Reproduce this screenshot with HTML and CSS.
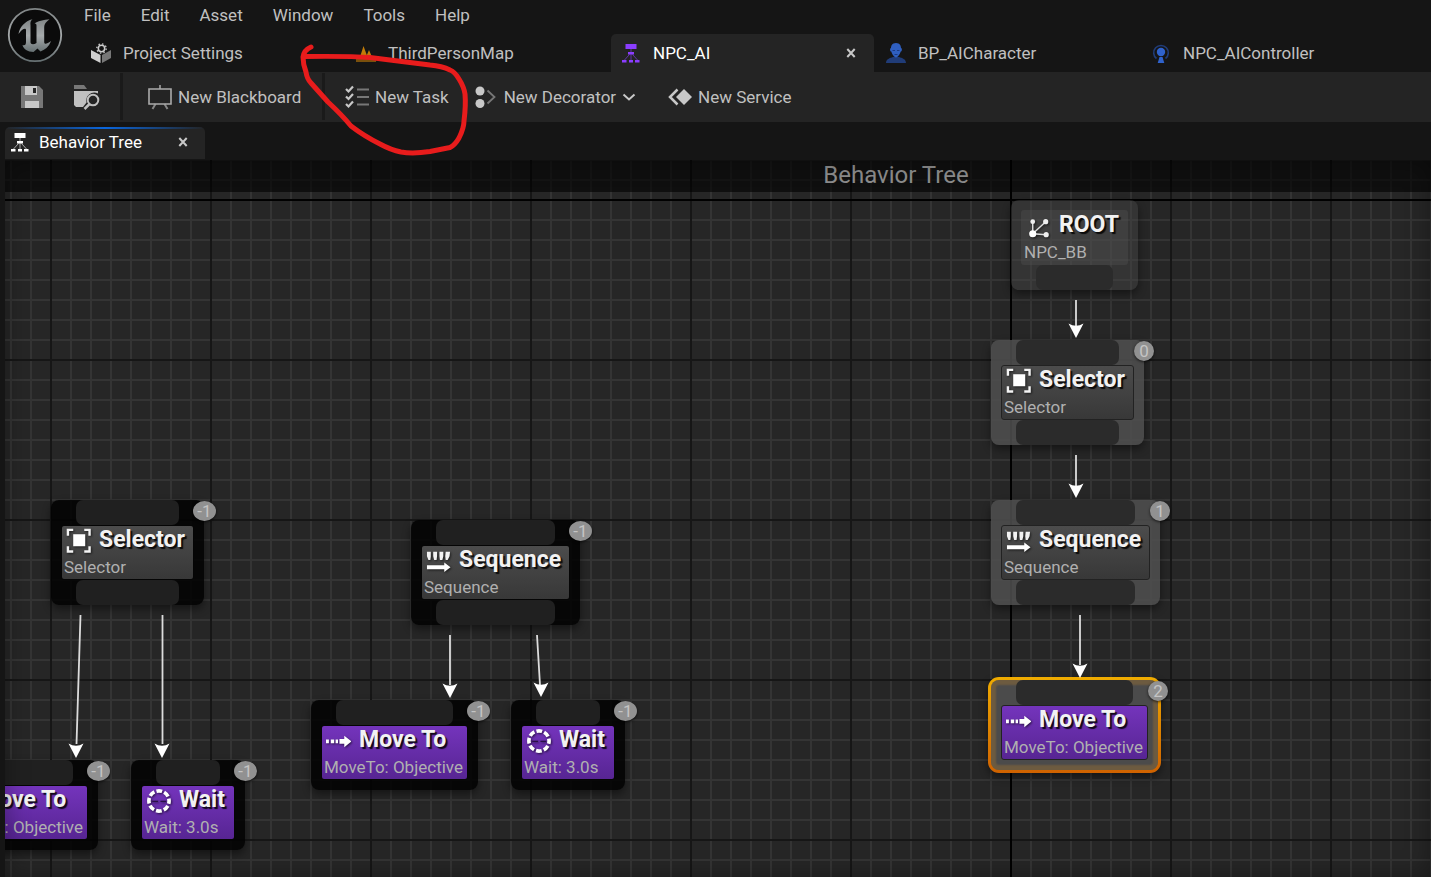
FILE: index.html
```html
<!DOCTYPE html>
<html lang="en">
<head>
<meta charset="utf-8">
<title>NPC_AI - Behavior Tree</title>
<link rel="stylesheet" href="styles.css">
</head>
<body>
<svg class="defs" aria-hidden="true">
  <defs>
    <linearGradient id="metal" x1="0" y1="0" x2="0" y2="1">
      <stop offset="0" stop-color="#808586"/><stop offset=".5" stop-color="#a6aaab"/><stop offset="1" stop-color="#667072"/>
    </linearGradient>
    <symbol id="i-tree" viewBox="0 0 20 20">
      <path d="M4.500 1h11v5h-11zM7 9h6v2.500H7zM1 17h4.500v2.500H1zM8 17h4v2.500H8zM14 17h4.500v2.500H14z" fill="currentColor"/>
      <path d="M10 6v3M10 11v6M8.500 11.500L3.500 17M11.500 11.500L16.500 17" stroke="currentColor" opacity=".6" fill="none"/>
    </symbol>
    <symbol id="i-x" viewBox="0 0 10 10"><path d="M1.300 1L8.700 9M8.700 1L1.300 9" stroke="currentColor" stroke-width="2" fill="none"/></symbol>
    <symbol id="n-selector" viewBox="0 0 26 26">
      <path d="M2 8.500v-6h5.500M19 2.500h5.500v6M24.500 19.500v5.500h-5.500M7.500 25H2v-5.500" stroke="#f4f4f4" stroke-width="2.500" fill="none"/>
      <rect x="7.500" y="7" width="12.500" height="12.500" fill="#fff"/>
    </symbol>
    <symbol id="n-sequence" viewBox="0 0 26 26">
      <path d="M1 4.500h4v5L4.500 13H2.500L1 9zM7.500 4.500h4V9l-.5 4H8.500l-1-4zM14 4.500h4V9l-1 4h-2.500L14 9zM20.500 4.500h4.500L24.500 9l-2 4h-2l-.5-4z" fill="#f2f2f2"/>
      <path d="M1 18.500h18V15.500l6.500 5-6.500 5V22.500H1z" fill="#fff"/>
    </symbol>
    <symbol id="n-move" viewBox="0 0 26 26">
      <path d="M0 12.500h3v4H0zM5 12.500h3.500v4H5zM10 12.500h2.500v4H10zM14 12h5V8.500l7.500 6-7.500 6V17h-5z" fill="#fff"/>
    </symbol>
    <symbol id="n-wait" viewBox="0 0 26 26">
      <circle cx="13.500" cy="14" r="10.500" fill="none" stroke="#fff" stroke-width="3.800" stroke-dasharray="6 2.250" stroke-dashoffset="3"/>
      <path d="M6.500 14.500h6M15 14.500h6" stroke="#2a1048" stroke-width="1.200"/>
    </symbol>
    <symbol id="n-root" viewBox="0 0 26 26">
      <path d="M7 20V7M7 20L21 7M7 20l14 1" stroke="#ddd" stroke-width="1.500" fill="none"/>
      <circle cx="7" cy="20" r="3.700" fill="#fff"/><circle cx="7" cy="7.500" r="2.500" fill="#eee"/><circle cx="20.500" cy="7.500" r="2.700" fill="#eee"/><circle cx="21" cy="21" r="2.700" fill="#eee"/>
    </symbol>
  </defs>
</svg>

<header class="top">
  <a class="logo" href="#" aria-label="Unreal Engine">
    <svg width="56" height="56" viewBox="0 0 56 56">
      <circle cx="28" cy="28" r="26.200" fill="#0b0b0b" stroke="url(#metal)" stroke-width="1.800"/>
      <path fill="url(#metal)" d="M11.500 27C12.500 20 18 14 25.500 12.200C23 14.500 23.500 16 23.500 18V35C23.500 37.500 26.500 38 29.500 36V18.500C29.500 16.500 28.500 16.500 27.500 17C30 13.500 37 13 42.500 12.200C39 15 37.200 17 37.200 20V35C37.200 37.500 39.500 37.500 44 34C42 40 37.500 43 33.500 44.500L30.500 41.500L26.500 45C20.500 45 16.500 42 15.500 38C18 39 19 37.500 19 35V23C19 20.500 15 21.500 11.500 27Z"/>
    </svg>
  </a>
  <div class="top-main">
    <nav class="menu" aria-label="Main menu">
      <button>File</button><button>Edit</button><button>Asset</button><button>Window</button><button>Tools</button><button>Help</button>
    </nav>
    <nav class="tabs" aria-label="Open assets">
      <a class="tab" href="#">
        <svg class="tab-icon" viewBox="0 0 20 20"><path d="M0 7l9.500 5v8L0 15z" fill="#d0d0d0"/><path d="M20 7l-9 5v8l9-5z" fill="#777"/><circle cx="10.500" cy="5.500" r="3.200" fill="#151515" stroke="#ccc" stroke-width="1.500"/><circle cx="10.500" cy="5.500" r="4.700" fill="none" stroke="#ccc" stroke-width="1.300" stroke-dasharray="1.500 2.190"/></svg>
        <span>Project Settings</span></a>
      <a class="tab" href="#">
        <svg class="tab-icon" viewBox="0 0 20 20"><path d="M4 14L7.500 3l4 11zM10 14l3-7 3 7z" fill="#c27c08"/><path d="M0 13h20v6H0z" fill="#7a500c"/></svg>
        <span>ThirdPersonMap</span></a>
      <div class="tab active">
        <svg class="tab-icon purple"><use href="#i-tree"/></svg>
        <span>NPC_AI</span>
        <button class="close" aria-label="Close NPC_AI"><svg width="10" height="10"><use href="#i-x"/></svg></button></div>
      <a class="tab" href="#">
        <svg class="tab-icon" viewBox="0 0 20 20"><path d="M0 20c0-4 4-5 7-6h6c3 1 7 2 7 6z" fill="#203c78"/><path d="M10 0c4 0 5 3 5 5 1.300 0 1.200 3.500-.3 3.600C14 11 12 14.500 10 14.500S6 11 5.300 8.600C3.800 8.500 3.700 5 5 5c0-2 1-5 5-5z" fill="#2f5fc0"/><path d="M6.500 7.500h2.500M11 7.500h2.500M8.500 11.500h3" stroke="#1b3a80"/></svg>
        <span>BP_AICharacter</span></a>
      <a class="tab" href="#">
        <svg class="tab-icon" viewBox="0 0 20 20"><path d="M5.500 15.500A7.300 7.300 0 1 1 14.500 15.500" fill="none" stroke="#203c78" stroke-width="1.600"/><circle cx="10" cy="9" r="4.200" fill="#2f62cc"/><path d="M8.500 14h3l1.800 6H6.700z" fill="#2f62cc"/></svg>
        <span>NPC_AIController</span></a>
    </nav>
  </div>
</header>

<div class="toolbar" role="toolbar" aria-label="Asset tools">
  <div class="group files">
    <button aria-label="Save"><svg width="24" height="24" viewBox="0 0 24 24"><path d="M1 1h18l4 4v18H1z" fill="#777"/><path d="M5 1h12v9H5zM5 16h14v7H5z" fill="#c8c8c8"/><path d="M13 3h3v5h-3z" fill="#242424"/></svg></button>
    <button aria-label="Browse"><svg width="26" height="26" viewBox="0 0 26 26"><path d="M0 1h10l3 4H0z" fill="#777"/><path d="M0 7h24v2.500a8 8 0 0 0-11.500 9L9 23H2l-2-2z" fill="#c0c0c0"/><circle cx="19" cy="16" r="5.300" fill="none" stroke="#c0c0c0" stroke-width="2"/><path d="M15.500 20L10.500 25" stroke="#c0c0c0" stroke-width="2.500"/></svg></button>
  </div>
  <div class="group board">
    <button><svg width="24" height="26" viewBox="0 0 24 26"><path d="M12 1v4M7.500 20L4.500 25M16.500 20l3 5" stroke="#888" stroke-width="2"/><path d="M1 5h22v15H1z" fill="none" stroke="#aaa" stroke-width="1.600"/></svg><span>New Blackboard</span></button>
  </div>
  <div class="group tasks">
    <button><svg width="24" height="24" viewBox="0 0 24 24"><path d="M1 4l2.500 2.500L8 1.500M1 11.500L3.500 14 8 9M1 19l2.500 2.500L8 16.500" fill="none" stroke="#c8c8c8" stroke-width="2.200"/><path d="M12 4.500h12M12 12h12M12 19.500h12" stroke="#777" stroke-width="2"/></svg><span>New Task</span></button>
    <button><svg width="23" height="24" viewBox="0 0 23 24"><circle cx="5" cy="6" r="4.500" fill="#c8c8c8"/><circle cx="5" cy="18.500" r="4.500" fill="#c8c8c8"/><path d="M12.500 5.500L19.500 12l-7 6.500" fill="none" stroke="#777" stroke-width="1.800"/></svg><span>New Decorator</span><svg class="chev" width="14" height="8" viewBox="0 0 14 8"><path d="M1.500 1.500L7 6.500l5.500-5" fill="none" stroke="#c8c8c8" stroke-width="2"/></svg></button>
    <button><svg width="24" height="18" viewBox="0 0 24 18"><path d="M16 1l8 8-8 8-8-8z" fill="#c8c8c8"/><path d="M9.500 1.500L2 9l7.500 7.500" fill="none" stroke="#c8c8c8" stroke-width="2.500"/></svg><span>New Service</span></button>
  </div>
</div>

<div class="panel-tabs">
  <div class="panel-tab">
    <svg width="20" height="20"><use href="#i-tree"/></svg>
    <span>Behavior Tree</span>
    <button class="close" aria-label="Close Behavior Tree"><svg width="10" height="10"><use href="#i-x"/></svg></button>
  </div>
</div>

<main class="graph">
  <div class="axis-x"></div><div class="axis-y"></div>
  <h1 class="graph-title">Behavior Tree</h1>

  <article class="node root live">
    <div class="body"><h2><svg><use href="#n-root"/></svg>ROOT</h2><p>NPC_BB</p></div><i class="pin"></i>
  </article>
  <article class="node selector live at-r1">
    <i class="pin"></i><div class="body"><h2><svg><use href="#n-selector"/></svg>Selector</h2><p>Selector</p></div><i class="pin"></i><b class="badge">0</b>
  </article>
  <article class="node sequence live at-r2">
    <i class="pin"></i><div class="body"><h2><svg><use href="#n-sequence"/></svg>Sequence</h2><p>Sequence</p></div><i class="pin"></i><b class="badge">1</b>
  </article>
  <article class="node move live selected at-r3">
    <i class="pin"></i><div class="body task"><h2><svg><use href="#n-move"/></svg>Move To</h2><p>MoveTo: Objective</p></div><b class="badge">2</b>
  </article>
  <article class="node selector idle at-l1">
    <i class="pin"></i><div class="body"><h2><svg><use href="#n-selector"/></svg>Selector</h2><p>Selector</p></div><i class="pin"></i><b class="badge">-1</b>
  </article>
  <article class="node move idle at-l2">
    <i class="pin"></i><div class="body task"><h2><svg><use href="#n-move"/></svg>Move To</h2><p>MoveTo: Objective</p></div><b class="badge">-1</b>
  </article>
  <article class="node wait idle at-l3">
    <i class="pin"></i><div class="body task"><h2><svg><use href="#n-wait"/></svg>Wait</h2><p>Wait: 3.0s</p></div><b class="badge">-1</b>
  </article>
  <article class="node sequence idle at-m1">
    <i class="pin"></i><div class="body"><h2><svg><use href="#n-sequence"/></svg>Sequence</h2><p>Sequence</p></div><i class="pin"></i><b class="badge">-1</b>
  </article>
  <article class="node move idle at-m2">
    <i class="pin"></i><div class="body task"><h2><svg><use href="#n-move"/></svg>Move To</h2><p>MoveTo: Objective</p></div><b class="badge">-1</b>
  </article>
  <article class="node wait idle at-m3">
    <i class="pin"></i><div class="body task"><h2><svg><use href="#n-wait"/></svg>Wait</h2><p>Wait: 3.0s</p></div><b class="badge">-1</b>
  </article>

  <svg class="wires" width="1426" height="717" viewBox="5 160 1426 717" aria-hidden="true">
    <defs><path id="head" d="M0 0L-7.500-14.500Q0-10 7.500-14.500Z" fill="#fff"/></defs>
    <g stroke="#dcdcdc" stroke-width="1.800">
      <path d="M1076 300v26M1076 455v31M1080 615v50M80.500 615L76.500 744M162.500 615v129M450 635v50M537 635l3 50"/>
    </g>
    <use href="#head" x="1076" y="338"/><use href="#head" x="1076" y="498"/><use href="#head" x="1080" y="678"/>
    <use href="#head" x="76" y="758"/><use href="#head" x="162" y="758"/><use href="#head" x="450" y="698"/><use href="#head" x="541" y="697"/>
  </svg>
</main>

<svg class="ink" width="190" height="130" viewBox="290 35 190 130" aria-hidden="true">
  <path d="M311 47Q304 50 303 57Q303 64 306 72Q307 79 311 83L328 102Q342 115 351 126Q364 136 380 144Q391 150 401 152Q413 154 430 151.500L450 147.500Q455 145 459 138Q464 128 464 121Q466 105 465 94Q464 87 459 79Q455 72 450 70Q442 66 430 65L370 57.500Q350 56 304 56.500" fill="none" stroke="#e81c1c" stroke-width="5" stroke-linecap="round" stroke-linejoin="round"/>
</svg>
</body>
</html>
```
FILE: styles.css
```css
* { box-sizing: border-box; }
body {
  margin: 0;
  min-height: 100vh;
  display: flex;
  flex-direction: column;
  position: relative;
  overflow: hidden;
  background: #151515;
  color: #c0c0c0;
  font: 17px/20px Roboto, "Liberation Sans", sans-serif;
}
button { border: 0; padding: 0; background: none; color: inherit; font: inherit; }
a { color: inherit; text-decoration: none; }
svg { flex: none; display: block; }
h1, h2, p { margin: 0; }
.defs { position: absolute; width: 0; height: 0; }

.top { display: flex; }
.logo { padding: 7px 0 0 7px; width: 81px; height: 72px; }
.top-main { flex: 1; min-width: 0; }
.menu { display: flex; gap: 30px; height: 34px; padding: 5px 3px; }
.menu button { height: 20px; }
.tabs { display: flex; gap: 2px; }
.tab {
  display: flex;
  align-items: center;
  gap: 12px;
  width: 263px;
  height: 38px;
  padding: 0 18px 0 10px;
  border-radius: 5px 5px 0 0;
}
.tab.active { background: #242424; color: #fff; }
.tab-icon { width: 20px; height: 20px; }
.purple { color: #8b3dff; }
.close { margin-left: auto; color: #c8c8c8; }

.toolbar { display: flex; height: 50px; padding: 1px 0 2px; background: #242424; }
.group { display: flex; align-items: center; padding: 0 20px; border-right: 3px solid #1a1a1a; }
.group:last-child { border: 0; }
.group button { display: flex; align-items: center; gap: 6px; white-space: nowrap; }
.files { width: 123px; gap: 30px; }
.board { width: 202px; padding-left: 25px; }
.tasks { gap: 26px; }
.chev { margin-right: 6px; }

.panel-tabs { height: 38px; padding: 5px 5px 0; }
.panel-tab {
  display: flex;
  align-items: center;
  gap: 9px;
  width: 200px;
  height: 32px;
  padding: 0 17px 2px 5px;
  border-radius: 5px 5px 0 0;
  background: linear-gradient(90deg, #242424, #0a66dd 50%, #242424) top / 100% 2px no-repeat #242424;
  color: #fff;
}

.graph {
  position: relative;
  flex: 1;
  min-height: 717px;
  margin-left: 5px;
  overflow: hidden;
  background-color: #262626;
  background-image:
    linear-gradient(90deg, #161616 2px, transparent 2px),
    linear-gradient(#161616 2px, transparent 2px),
    linear-gradient(90deg, #343434 2px, transparent 2px),
    linear-gradient(#343434 2px, transparent 2px);
  background-size: 160px 160px, 160px 160px, 20px 20px, 20px 20px;
  background-position: 45px 39px, 45px 39px, 5px 19px, 5px 19px;
}
.graph::after { content: ""; position: absolute; inset: 0; box-shadow: inset 0 0 24px rgba(0, 0, 0, .35); pointer-events: none; }
.axis-x, .axis-y { position: absolute; background: #000; }
.axis-x { left: 0; right: 0; top: 39px; height: 2px; }
.axis-y { top: 0; bottom: 0; left: 1005px; width: 2px; }
.graph-title {
  position: relative;
  height: 32px;
  padding-left: 356px;
  background: rgba(0, 0, 0, .6);
  color: #8c8c8c;
  font-size: 24px;
  font-weight: 400;
  line-height: 30px;
  text-align: center;
}

.node {
  position: absolute;
  padding: 0 10px;
  border-radius: 8px;
  background: rgba(2, 2, 2, .88);
  box-shadow: 0 4px 8px rgba(0, 0, 0, .45);
}
.node.live { background: rgba(80, 80, 80, .85); }
.pin { display: block; height: 25px; margin: 0 15px; border-radius: 7px; background: #202020; }
.live .pin { background: #2b2b2b; }
.body {
  height: 55px;
  padding: 0 2px;
  border: 1px solid #050505;
  border-radius: 3px;
  background: linear-gradient(#4c4c4c, #383838);
}
.live .body { border-color: #222; }
.body.task { background: linear-gradient(#7434bc, #572593); }
.body h2 {
  display: flex;
  align-items: center;
  gap: 8px;
  height: 30px;
  padding: 0 0 2px 2px;
  color: #f2f2f2;
  font-size: 23px;
  font-weight: 700;
  line-height: 28px;
  text-shadow: 2px 2px 1px rgba(0, 0, 0, .85);
  white-space: nowrap;
}
.body h2 svg { width: 25px; height: 26px; filter: drop-shadow(1px 1px 1px rgba(0, 0, 0, .6)); }
.body p { color: #b0b0b0; line-height: 22px; white-space: nowrap; }
.badge {
  position: absolute;
  top: 1px;
  right: -10px;
  width: 20px;
  height: 20px;
  border-radius: 50%;
  background: #919191;
  box-shadow: 0 1px 3px rgba(0, 0, 0, .7);
  color: #c4c4c4;
  font-weight: 400;
  text-align: center;
}
.idle .badge { right: -12px; width: 23px; }
.selector { width: 153px; }
.sequence { width: 169px; }
.move { width: 167px; height: 90px; }
.wait { width: 114px; height: 90px; }
.root { left: 1006px; top: 40px; width: 127px; height: 90px; padding-top: 10px; }
.node.root { background: rgba(70, 70, 70, .45); }
.root .body { border-color: transparent; background: rgba(90, 90, 90, .3); }
.root .body h2 svg { margin-top: 3px; }
.node.selected {
  width: 173px;
  height: 96px;
  border: 3px solid transparent;
  border-radius: 11px;
  background:
    linear-gradient(#4b4b4b, #4b4b4b) padding-box,
    linear-gradient(#f0ac00, #cf6200) border-box;
  box-shadow: inset 0 0 2px 5px rgba(150, 110, 50, .45), 0 4px 8px rgba(0, 0, 0, .45);
}
.at-r1 { left: 986px; top: 180px; }
.at-r2 { left: 986px; top: 340px; }
.at-r3 { left: 983px; top: 517px; }
.at-l1 { left: 46px; top: 340px; }
.at-l2 { left: -74px; top: 600px; }
.at-l3 { left: 126px; top: 600px; }
.at-m1 { left: 406px; top: 360px; }
.at-m2 { left: 306px; top: 540px; }
.at-m3 { left: 506px; top: 540px; }
.wires { position: absolute; left: 0; top: 0; }
.ink { position: absolute; left: 290px; top: 35px; pointer-events: none; }
```
